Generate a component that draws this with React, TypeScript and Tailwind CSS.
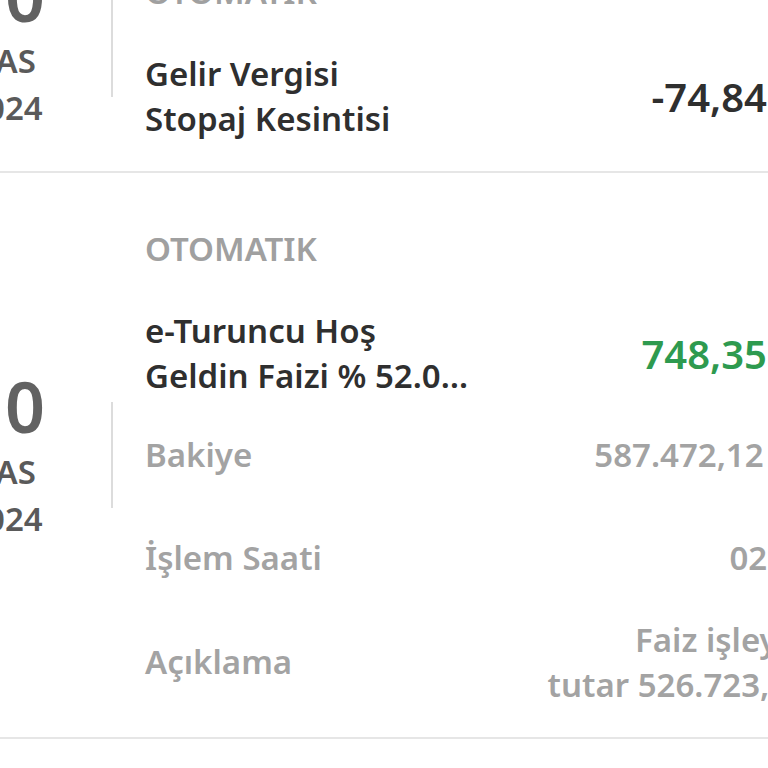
import { ReactNode } from 'react';

interface Detail {
  label: string;
  value: ReactNode;
  gap: string;
  shift: string;
}

interface Transaction {
  day: string;
  month: string;
  year: string;
  type: string;
  title: string;
  titleWidth: string;
  amount: string;
  positive: boolean;
  details?: Detail[];
  first?: boolean;
}

const transactions: Transaction[] = [
  {
    day: '30',
    month: 'KAS',
    year: '2024',
    type: 'OTOMATIK',
    title: 'Gelir Vergisi Stopaj Kesintisi',
    titleWidth: 'w-[290px]',
    amount: '-74,84 TL',
    positive: false,
    first: true,
  },
  {
    day: '30',
    month: 'KAS',
    year: '2024',
    type: 'OTOMATIK',
    title: 'e-Turuncu Hoş Geldin Faizi % 52.00 Kampanyası',
    titleWidth: 'w-[340px]',
    amount: '748,35 TL',
    positive: true,
    details: [
      { label: 'Bakiye', value: '587.472,12 TL', gap: 'mt-[34px]', shift: 'mr-[13px]' },
      { label: 'İşlem Saati', value: '02:00', gap: 'mt-[58px]', shift: 'mr-[8px]' },
      {
        label: 'Açıklama',
        value: (
          <>
            <span className="block mr-[4px]">Faiz işleyen</span>
            <span className="block mr-[15px]">tutar 526.723,45</span>
          </>
        ),
        gap: 'mt-[37px]',
        shift: 'mr-0',
      },
    ],
  },
];

function TransactionRow({ tx }: { tx: Transaction }) {
  return (
    <div
      className={`flex items-center border-b-2 border-[#e6e6e6] ${tx.first ? 'mt-[-84px]' : ''}`}
    >
      <div className="w-[120px] shrink-0 flex flex-col items-center text-[#5a5a5a] font-semibold">
        <span className="text-[70px] leading-[60px] tracking-[6px] text-[#626262]">{tx.day}</span>
        <span className="mt-[18px] text-[33px] leading-[36px]">{tx.month}</span>
        <span className="mt-[14px] text-[33px] leading-[30px]">{tx.year}</span>
      </div>
      <div className="ml-[46px] w-[2px] h-[106px] bg-[#dcdcdc] shrink-0" />
      <div className="ml-[32px] flex-1 pt-[54px] pb-[30px]">
        <div className="text-[33px] leading-[44px] font-semibold text-[#a0a0a0]">{tx.type}</div>
        <div className="mt-[37px] flex items-center justify-between">
          <div
            className={`${tx.titleWidth} text-[33px] leading-[45px] font-semibold text-[#2f2f2f] line-clamp-2`}
          >
            {tx.title}
          </div>
          <div
            className={`text-[40px] leading-[45px] font-semibold ${
              tx.positive ? 'text-[#2e9a4f]' : 'text-[#2f2f2f]'
            }`}
          >
            {tx.amount}
          </div>
        </div>
        {tx.details?.map((d) => (
          <div key={d.label} className={`${d.gap} flex items-center justify-between`}>
            <span className="text-[33px] leading-[44px] font-semibold text-[#a3a3a3]">{d.label}</span>
            <span
              className={`${d.shift} text-right text-[33px] leading-[45px] font-semibold text-[#a3a3a3]`}
            >
              {d.value}
            </span>
          </div>
        ))}
      </div>
    </div>
  );
}

export default function App() {
  return (
    <div
      className="w-[768px] h-[768px] overflow-hidden bg-white"
      style={{ fontFamily: '"Noto Sans", "Open Sans", sans-serif' }}
    >
      <div className="ml-[-55px] w-[877px]">
        {transactions.map((tx, i) => (
          <TransactionRow key={i} tx={tx} />
        ))}
      </div>
    </div>
  );
}
